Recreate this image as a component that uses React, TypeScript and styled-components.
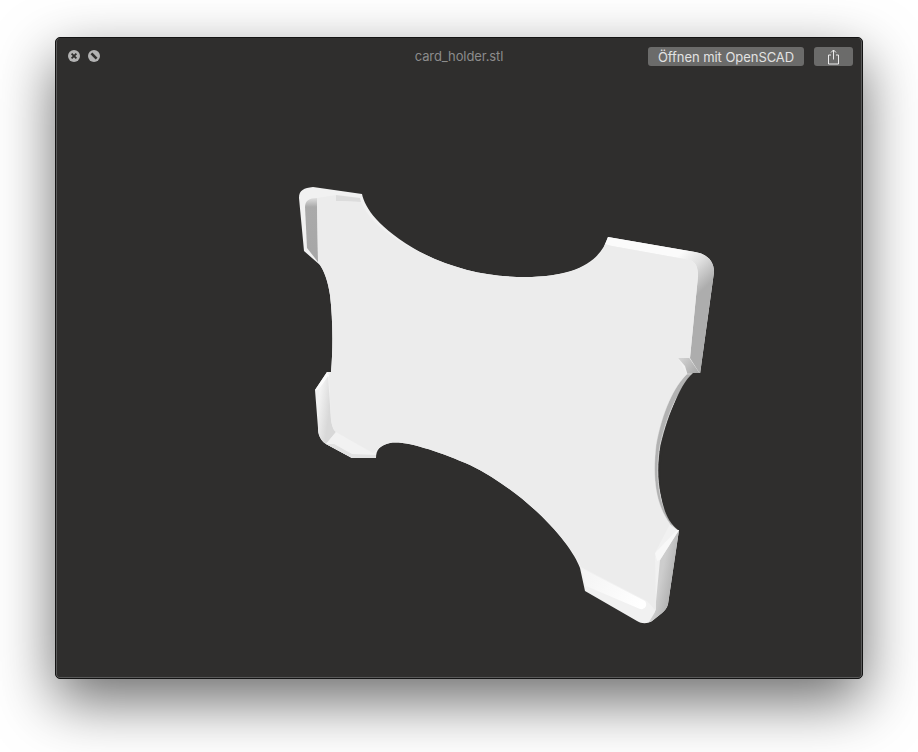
import React from 'react';
import styled, { createGlobalStyle } from 'styled-components';

const GlobalStyle = createGlobalStyle`
  html, body {
    margin: 0;
    height: 100%;
    background: #fff;
    overflow: hidden;
  }
`;

const Page = styled.div`
  padding: 37px 55px 0;
  height: 752px;
  box-sizing: border-box;
`;

const Window = styled.div`
  width: 808px;
  height: 642px;
  box-sizing: border-box;
  display: flex;
  flex-direction: column;
  background: #2f2e2d;
  border: 1px solid #141414;
  border-radius: 5px;
  box-shadow:
    inset 1px 0 #5a5a5a,
    inset -1px 0 #5a5a5a,
    inset 0 -1px #5a5a5a,
    0 22px 58px 0 rgba(0, 0, 0, 0.58);
  font-family: Inter, 'Liberation Sans', sans-serif;
`;

const TitleBar = styled.div`
  height: 37px;
  flex: none;
  display: grid;
  grid-template-columns: 1fr auto 1fr;
  align-items: center;
  padding: 0 9px 0 12px;
`;

const WindowControls = styled.div`
  display: flex;
  gap: 8px;
  padding-bottom: 1px;
`;

const ControlIcon = styled.svg`
  display: block;
  width: 12px;
  height: 12px;
`;

const Title = styled.div`
  font-size: 13px;
  letter-spacing: -0.1px;
  color: #8c8c8c;
  padding: 0 3px 1px 0;
`;

const Actions = styled.div`
  display: flex;
  justify-content: flex-end;
  gap: 10px;
`;

const ActionButton = styled.button<{ $width: number }>`
  width: ${({ $width }) => $width}px;
  height: 19px;
  padding: 0;
  border: 0;
  border-radius: 3px;
  background: #6b6b6a;
  color: #e2e2e2;
  font: inherit;
  font-size: 13px;
  letter-spacing: -0.05px;
  display: flex;
  align-items: center;
  justify-content: center;
`;

const Stage = styled.div`
  flex: 1;
  min-height: 0;
`;

const ModelSvg = styled.svg`
  display: block;
  width: 100%;
  height: 100%;
`;

function CardHolderModel() {
  return (
    <ModelSvg viewBox="56 75 806 603">
      <defs>
        <linearGradient id="rimTR" gradientUnits="userSpaceOnUse" x1="684" y1="250" x2="713" y2="280">
          <stop offset="0" stopColor="#fbfbfb" />
          <stop offset="0.45" stopColor="#e0e0e0" />
          <stop offset="1" stopColor="#adadad" />
        </linearGradient>
        <linearGradient id="sideBR" gradientUnits="userSpaceOnUse" x1="656" y1="600" x2="675" y2="604">
          <stop offset="0" stopColor="#cdcdcd" />
          <stop offset="1" stopColor="#a6a6a6" />
        </linearGradient>
        <linearGradient id="patchBR" gradientUnits="userSpaceOnUse" x1="582" y1="570" x2="640" y2="605">
          <stop offset="0" stopColor="#f4f4f4" />
          <stop offset="1" stopColor="#ffffff" />
        </linearGradient>
        <linearGradient id="stripTL" x1="0" y1="0" x2="0" y2="1">
          <stop offset="0" stopColor="#dedede" />
          <stop offset="0.14" stopColor="#aaaaaa" />
          <stop offset="1" stopColor="#a6a6a6" />
        </linearGradient>
        <linearGradient id="bandBL" gradientUnits="userSpaceOnUse" x1="318" y1="400" x2="331" y2="402">
          <stop offset="0" stopColor="#f4f4f4" />
          <stop offset="1" stopColor="#d8d8d8" />
        </linearGradient>
        <linearGradient id="notchTip" gradientUnits="userSpaceOnUse" x1="680" y1="358" x2="698" y2="372">
          <stop offset="0" stopColor="#d4d4d4" />
          <stop offset="1" stopColor="#a8a8a8" />
        </linearGradient>
      </defs>

      {/* silhouette */}
      <path
        fill="#f1f1f1"
        d="M299 198 C299 190 304 188 313 187 L362 194 C365 208 378 228 420 252 C455 270 490 277 525 277 C575 277 600 262 608 237 L695 252 C708 254 714 262 714 272 L700 374 C680 382 668 412 660 445 C654 480 660 512 679 530 L668 604 C667 608 665 610 662 613 L652 621 C647 624 642 624 637 621 L585 591 L580 568 C572 545 530 495 470 465 C440 452 405 440 390 443 C380 445 376 450 376 458 L352 458 L326 444 C320 440 318 434 318 428 L315 390 L327 372 L331 372 C333 350 333 320 330 295 C328 282 325 272 320 265 L304 251 Z"
      />

      {/* top left corner */}
      <path fill="url(#stripTL)" d="M305 207 C305 201 309 198 317 198 L318 262 L307 248 Z" />
      <path fill="#dcdcdc" d="M336 195 L360 198 L361 202 L336 201 Z" />

      {/* rim along the top edge, round the corner and down the right side */}
      <path
        fill="url(#rimTR)"
        d="M608 237 L695 252 C708 254 714 262 714 272 L700 374 L690 358 L698 276 C698 268 696 262 690 260 L612 246 C609 246 606 245 605 244 Z"
      />
      <path fill="url(#notchTip)" d="M678 358 L688 356 L700 374 L688 376 L685 366 Z" />

      {/* bottom left corner */}
      <path fill="#fbfbfb" d="M327 372 L315 390 L318 390 L329 376 Z" />
      <path fill="url(#bandBL)" d="M319 390 L328 376 L331 420 C332 426 334 430 336 432 L326 444 C320 440 318 434 318 428 Z" />
      <path fill="#f2f2f2" d="M336 432 L372 453 L376 458 L352 458 L326 444 Z" />
      <path fill="#e2e2e2" d="M352 458 L376 458 L376 455 L352 454 L334 444 L326 444 Z" />

      {/* right notch */}
      <path fill="#b2b2b2" stroke="#d0d0d0" strokeWidth="1" d="M687 374 L700 374 C680 382 668 412 660 445 C654 480 660 512 678 530 L670 524 C656 505 652 480 656 445 C662 412 674 386 687 374 Z" />
      <path fill="#2f2e2d" d="M693 373 L714 373 L714 530 L678 530 C662 518 658 490 661 462 C666 420 678 386 693 373 Z" />

      {/* bottom right corner */}
      <path fill="url(#sideBR)" d="M660 560 L679 530 L668 604 C667 608 665 610 662 613 L652 621 C651 622 650 622 649 622 L655 612 Z" />
      <path fill="#f8f8f8" d="M655 553 L677 530 L679 530 L660 560 L657 561 Z" />
      <path fill="url(#patchBR)" d="M581 568 L645 601 C648 605 645 610 640 609 L586 586 Z" />

      {/* main face */}
      <path
        fill="#ececec"
        d="M317 198 L336 195 L336 201 L361 202 C368 218 385 236 420 252 C455 270 490 277 525 277 C575 277 600 262 605 244 L612 246 L690 260 C696 262 698 268 698 276 L690 358 L678 358 L687 374 C674 386 662 412 656 445 C652 480 656 505 670 524 L655 553 L656 611 L647 601 L581 567 C572 545 530 495 470 465 C440 452 405 440 390 443 C384 444 376 450 373 453 L336 432 C333 430 332 426 331 420 L329 376 L331 372 C333 350 333 320 330 295 C328 282 325 272 318 262 Z"
      />
    </ModelSvg>
  );
}

export default function App() {
  return (
    <Page>
      <GlobalStyle />
      <Window>
        <TitleBar>
          <WindowControls>
            <ControlIcon viewBox="0 0 12 12">
              <circle cx="6" cy="6" r="6" fill="#b3b3b3" />
              <path d="M3.6 3.6 L8.4 8.4 M8.4 3.6 L3.6 8.4" stroke="#2f2e2d" strokeWidth="1.8" />
            </ControlIcon>
            <ControlIcon viewBox="0 0 12 12">
              <circle cx="6" cy="6" r="6" fill="#b3b3b3" />
              <path d="M3.4 3.4 L8.6 8.6" stroke="#2f2e2d" strokeWidth="2.6" />
            </ControlIcon>
          </WindowControls>
          <Title>card_holder.stl</Title>
          <Actions>
            <ActionButton $width={156}>Öffnen mit OpenSCAD</ActionButton>
            <ActionButton $width={39}>
              <svg width="13" height="16" viewBox="0 0 13 16" fill="none" stroke="#ececec" strokeWidth="1">
                <path d="M4 6 H1.5 V15 H11.5 V6 H9" />
                <path d="M6.5 10.5 V1 M4 3.5 L6.5 1 L9 3.5" />
              </svg>
            </ActionButton>
          </Actions>
        </TitleBar>
        <Stage>
          <CardHolderModel />
        </Stage>
      </Window>
    </Page>
  );
}
